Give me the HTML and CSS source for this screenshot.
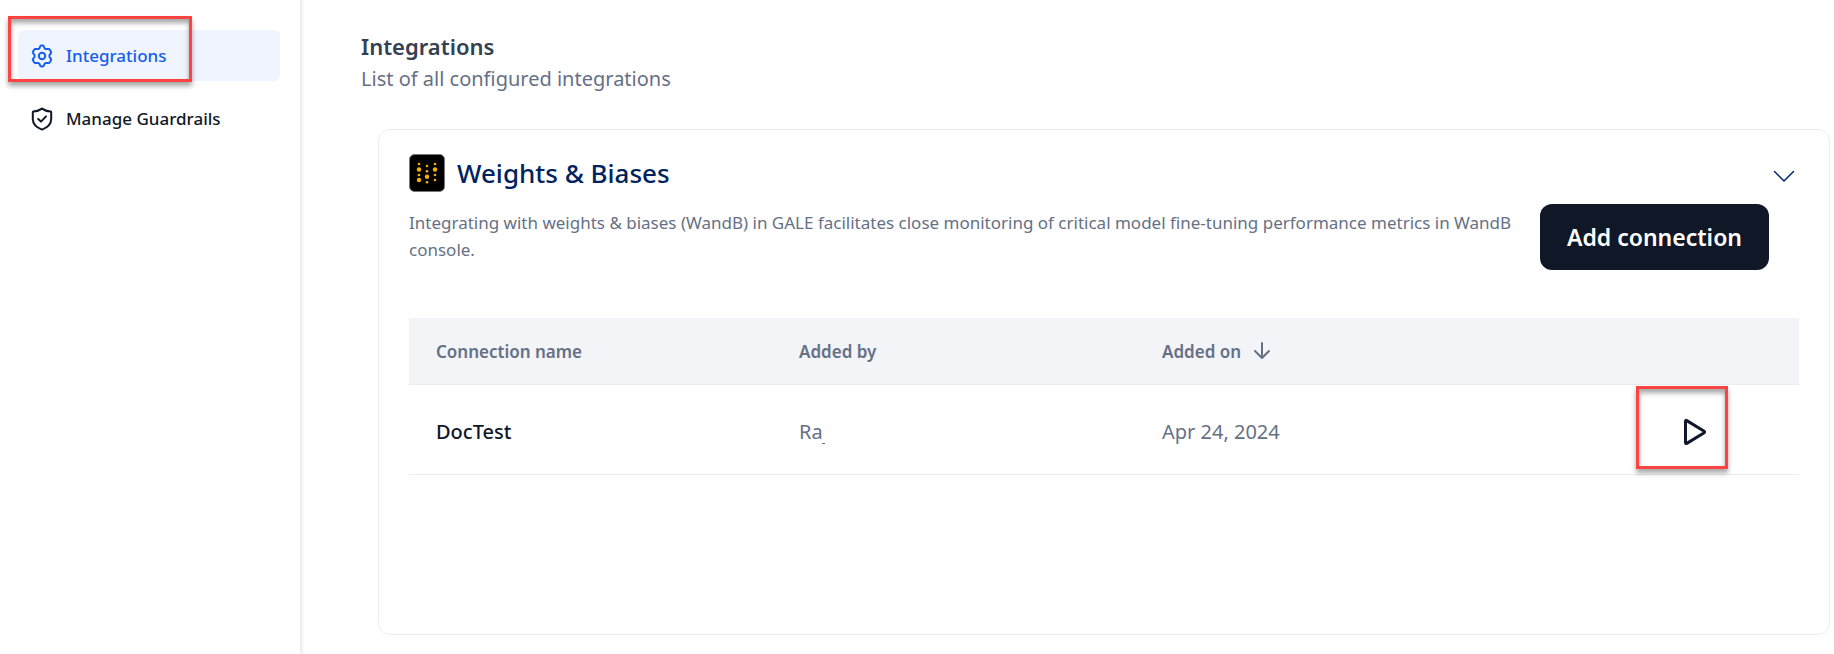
FILE: index.html
```html
<!DOCTYPE html>
<html lang="en">
<head>
<meta charset="utf-8">
<title>Integrations</title>
<meta name="viewport" content="width=device-width, initial-scale=1">
<link rel="stylesheet" href="styles.css">
</head>
<body>
<div class="app">
  <nav class="sidebar" aria-label="Settings">
    <a class="nav-item active" href="#integrations" aria-current="page">
      <svg class="nav-icon" viewBox="0 0 24 24" aria-hidden="true"><path d="M9.4 4.2 10.2 2.3Q10.5 1.5 11.4 1.5H12.6Q13.5 1.5 13.8 2.3L14.6 4.2Q15 5 15.9 5.1L18.3 5Q19.3 4.9 19.8 5.7L20.9 7.6Q21.4 8.5 20.8 9.3L19.6 10.9Q19 12 19.6 13.1L20.8 14.7Q21.4 15.5 20.9 16.4L19.8 18.3Q19.3 19.1 18.3 19L15.9 18.9Q15 19 14.6 19.8L13.8 21.7Q13.5 22.5 12.6 22.5H11.4Q10.5 22.5 10.2 21.7L9.4 19.8Q9 19 8.1 18.9L5.7 19Q4.7 19.1 4.2 18.3L3.1 16.4Q2.6 15.5 3.2 14.7L4.4 13.1Q5 12 4.4 10.9L3.2 9.3Q2.6 8.5 3.1 7.6L4.2 5.7Q4.7 4.9 5.7 5L8.1 5.1Q9 5 9.4 4.2Z"/><circle cx="12" cy="12" r="3.2"/></svg>
      <span>Integrations</span>
      <span class="highlight highlight-nav"></span>
    </a>
    <a class="nav-item" href="#guardrails">
      <svg class="nav-icon" viewBox="0 0 24 24" aria-hidden="true"><path d="M12 1.6C9.8 3.3 6.8 4.3 3.4 4.5Q2.8 4.6 2.8 5.3V12C2.8 17.2 6.6 20.5 12 22.6C17.4 20.5 21.2 17.2 21.2 12V5.3Q21.2 4.6 20.6 4.5C17.2 4.3 14.2 3.3 12 1.6Z"/><path d="m8.2 12 2.8 2.6 5-5.2"/></svg>
      <span>Manage Guardrails</span>
    </a>
  </nav>
  <main class="main">
    <header class="page-header">
      <h1 class="page-title">Integrations</h1>
      <p class="page-subtitle">List of all configured integrations</p>
    </header>
    <section class="card">
      <div class="card-header">
        <svg class="brand" viewBox="0 0 36 38" aria-hidden="true"><rect x=".5" y=".5" width="35" height="37" rx="5" fill="#000" stroke="#777"/><g fill="#f5b000"><circle cx="10" cy="10" r="1.3"/><circle cx="10" cy="15.5" r="2.2"/><circle cx="10" cy="21" r="1.3"/><circle cx="10" cy="26" r="2.2"/><circle cx="18" cy="12" r="1.3"/><circle cx="18" cy="17.3" r="1.3"/><circle cx="18" cy="22.8" r="2.2"/><circle cx="18" cy="28.3" r="1.3"/><circle cx="26" cy="10" r="1.3"/><circle cx="26" cy="15.5" r="2.2"/><circle cx="26" cy="21" r="1.3"/><circle cx="26" cy="26" r="1.3"/></g></svg>
        <h2 class="card-title">Weights &amp; Biases</h2>
        <button class="icon-button collapse" type="button" aria-label="Collapse"><svg width="22" height="14" viewBox="0 0 22 14"><path d="m1.5 2.5 9.5 9.5L20.5 2.5"/></svg></button>
      </div>
      <div class="card-intro">
        <p class="description">Integrating with weights &amp; biases (WandB) in GALE facilitates close monitoring of critical model fine-tuning performance metrics in WandB console.</p>
        <button class="add-button" type="button">Add connection</button>
      </div>
      <table class="connections">
        <thead>
          <tr>
            <th scope="col">Connection name</th>
            <th scope="col">Added by</th>
            <th scope="col"><span class="sort">Added on <svg width="18" height="18" viewBox="0 0 18 18" aria-hidden="true"><path d="M9 1v15M2 9l7 7 7-7"/></svg></span></th>
            <th class="action-cell"></th>
          </tr>
        </thead>
        <tbody>
          <tr>
            <td class="name">DocTest</td>
            <td><span class="user">Ra</span></td>
            <td>Apr 24, 2024</td>
            <td class="action-cell">
              <button class="icon-button play" type="button" aria-label="Test connection"><svg width="24" height="28" viewBox="0 0 24 28"><path d="M3.5 2.5Q2.5 2 2.5 3.5V24.5Q2.5 26 3.8 25.4L21.2 14.7Q22 14 21.2 13.3L3.8 2.6Z"/></svg><span class="highlight highlight-play"></span></button>
            </td>
          </tr>
        </tbody>
      </table>
    </section>
  </main>
</div>
</body>
</html>
```
FILE: styles.css
```css
* {
  box-sizing: border-box;
}

body {
  margin: 0;
  background: #fff;
  color: #101828;
  font-family: "Segoe UI", "Noto Sans", sans-serif;
}

h1, h2, p {
  margin: 0;
}

button {
  font: inherit;
  cursor: pointer;
}

svg {
  fill: none;
  stroke: currentColor;
  stroke-linecap: round;
  stroke-linejoin: round;
}

.app {
  display: flex;
  min-height: 100vh;
}

.sidebar {
  display: flex;
  flex: 0 0 300px;
  flex-direction: column;
  gap: 12px;
  padding: 30px 20px 0 18px;
}

.nav-item {
  position: relative;
  display: flex;
  align-items: center;
  gap: 12px;
  height: 51px;
  padding: 0 12px;
  border-radius: 6px;
  color: #101828;
  font-size: 17px;
  font-weight: 500;
  text-decoration: none;
}

.nav-item.active {
  background: #eff4ff;
  color: #155eef;
}

.nav-icon {
  width: 24px;
  height: 24px;
  stroke-width: 2;
}

.highlight {
  position: absolute;
  border: 3px solid #ff4343;
  box-shadow: 0 4px 5px rgba(0, 0, 0, 0.35), inset 0 4px 5px rgba(0, 0, 0, 0.35);
  pointer-events: none;
}

.highlight-nav {
  top: -14px;
  left: -10px;
  width: 184px;
  height: 66px;
}

.main {
  display: flex;
  flex: 1;
  flex-direction: column;
  min-width: 0;
  padding: 29px 4px 19px 61px;
  background: linear-gradient(to right, #ebebed, #fff 5px);
}

.page-title {
  color: #344054;
  font-size: 22px;
  font-weight: 600;
  line-height: 34px;
}

.page-subtitle {
  color: #667085;
  font-size: 20px;
  line-height: 32px;
}

.card {
  flex: 1;
  margin: 34px 0 0 17px;
  padding: 24px 30px;
  border: 1px solid #eaecf5;
  border-radius: 12px;
}

.card-header {
  display: flex;
  align-items: center;
  gap: 12px;
}

.brand {
  width: 36px;
  height: 38px;
  stroke: none;
}

.card-title {
  flex: 1;
  color: #00235f;
  font-size: 26px;
  font-weight: 500;
  line-height: 38px;
}

.icon-button {
  display: flex;
  padding: 0;
  border: 0;
  background: none;
  color: inherit;
}

.collapse {
  margin: 6px 4px 0 0;
  color: #00296b;
  stroke-width: 1.5;
}

.card-intro {
  display: flex;
  align-items: flex-start;
  justify-content: space-between;
  gap: 24px;
  margin-top: 12px;
  padding-right: 30px;
}

.description {
  padding-top: 5px;
  color: #667085;
  font-size: 17px;
  line-height: 27px;
}

.add-button {
  flex: none;
  height: 66px;
  padding: 0 27px;
  border: 0;
  border-radius: 12px;
  background: #101828;
  color: #fff;
  font-size: 23px;
  font-weight: 600;
}

.connections {
  width: 100%;
  margin-top: 48px;
  border-collapse: separate;
  border-spacing: 0;
  table-layout: fixed;
  color: #667085;
  text-align: left;
}

.connections th,
.connections td {
  padding: 0 27px;
  border-bottom: 1px solid #eaecf0;
}

.connections th {
  width: 363px;
  height: 67px;
  background: #f2f4f7;
  font-size: 17px;
  font-weight: 600;
}

.connections td {
  height: 90px;
  padding-top: 4px;
  font-size: 20px;
}

.connections th.action-cell {
  width: auto;
}

.connections .name {
  color: #101828;
  font-weight: 500;
}

.sort {
  display: flex;
  align-items: center;
  gap: 12px;
}

.sort svg {
  stroke-width: 2;
}

.user {
  position: relative;
}

.user::after {
  position: absolute;
  right: -2px;
  bottom: 1px;
  width: 3px;
  height: 1px;
  background: #667085;
  content: "";
}

.connections td.action-cell {
  padding-right: 92px;
}

.play {
  position: relative;
  margin-left: auto;
  color: #101828;
}

.play svg {
  stroke-width: 3;
}

.highlight-play {
  top: -32px;
  right: -21px;
  width: 92px;
  height: 83px;
}
```
